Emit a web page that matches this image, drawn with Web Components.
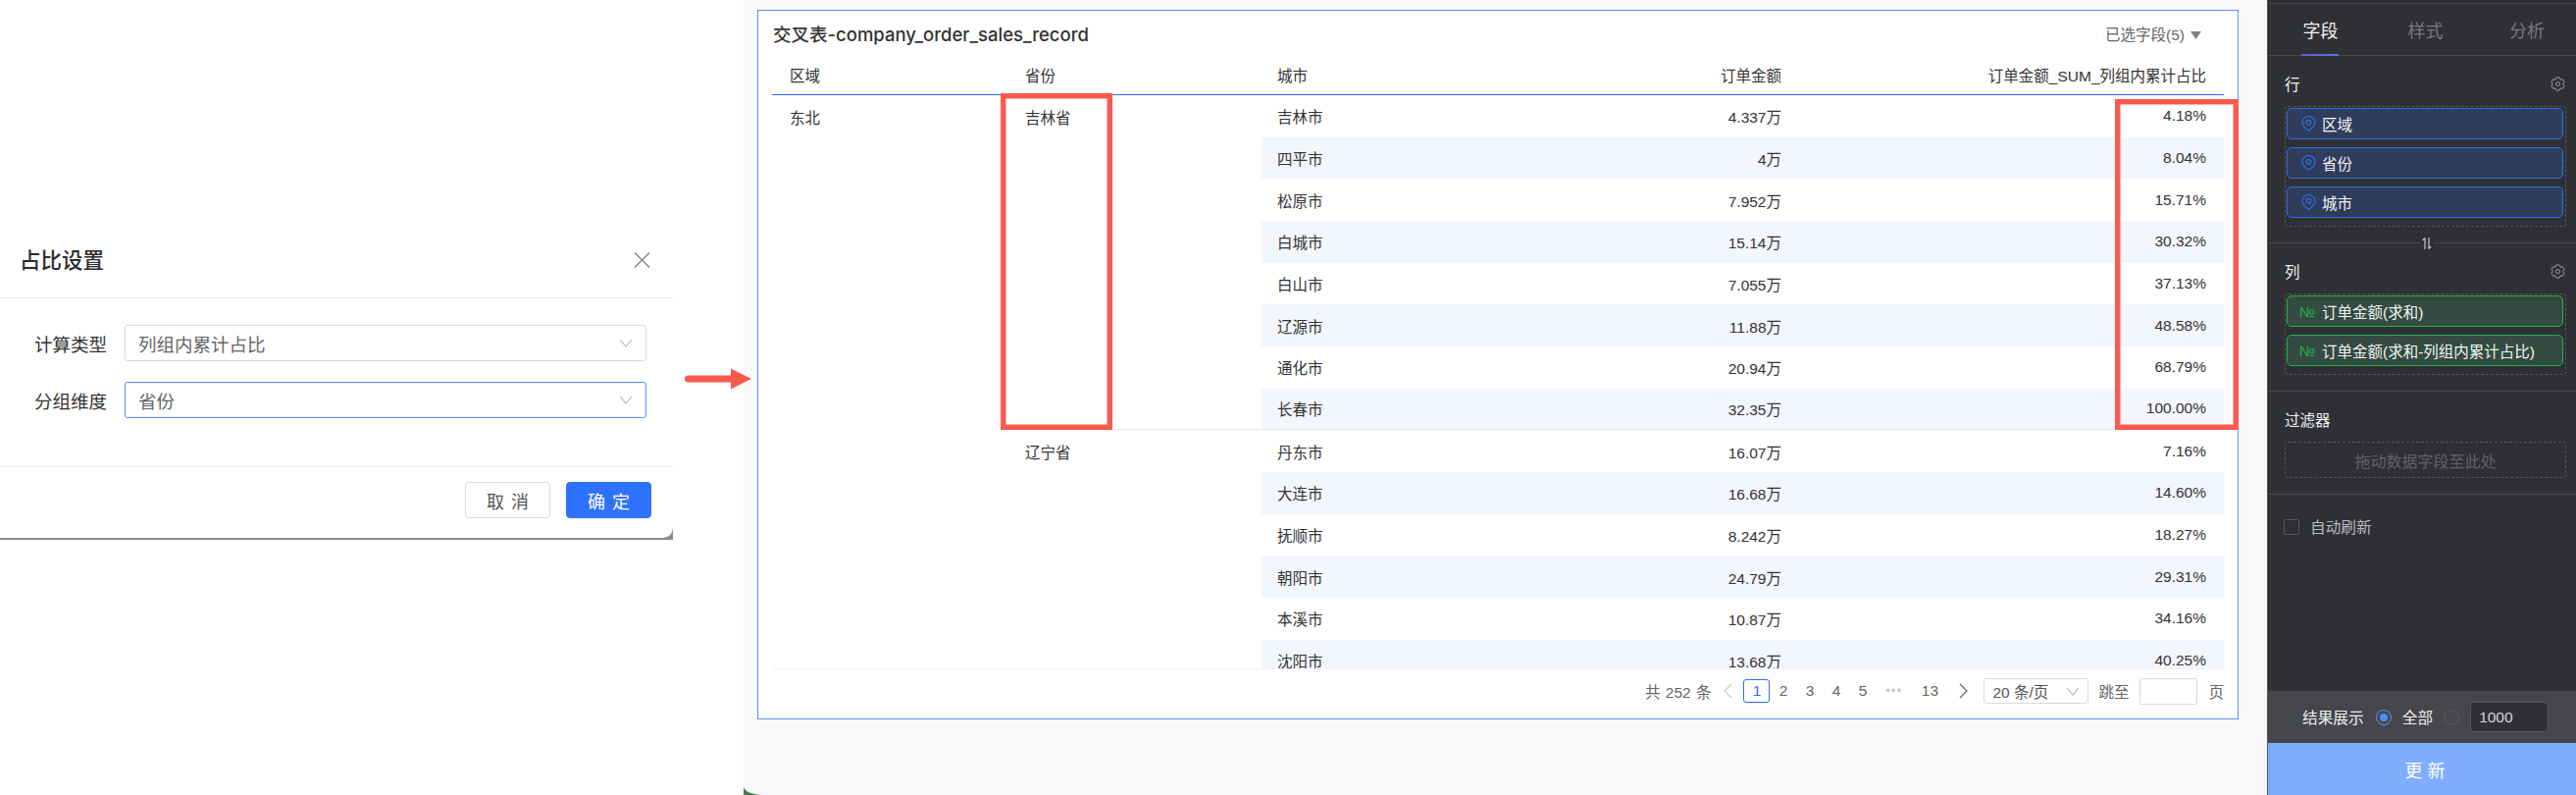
<!DOCTYPE html>
<html lang="zh-CN">
<head>
<meta charset="utf-8">
<title>占比设置</title>
<style>
	html, body { margin: 0; padding: 0; background: #fff; }
	body { font-family: "Liberation Sans", "Noto Sans CJK SC", sans-serif; }
	.page { display: flex; width: 2626px; height: 810px; overflow: hidden; }
</style>
</head>
<body>

<template id="tpl-ratio-dialog">
	<style>
		:host { display: block; position: relative; z-index: 1; width: 758px; height: 810px; background: #fff; flex: none; }
		.box { position: relative; width: 686px; margin-top: 230px; background: #fff; border-bottom: 2px solid #8b8b8b; box-sizing: border-box; height: 320px; color: #333; }
		.box::after { content: ""; position: absolute; right: 0; bottom: 0; width: 9px; height: 9px; background: radial-gradient(circle at 0 0, transparent 8px, #8b8b8b 9px); }
		.head { height: 73px; display: flex; align-items: center; justify-content: space-between; padding: 0 23px 0 20px; border-bottom: 1px solid #ececec; }
		.head b { font-size: 21.5px; font-weight: 500; color: #2b2b2b; padding-bottom: 7px; }
		.head svg { margin-bottom: 3px; }
		.body { height: 172px; box-sizing: border-box; padding: 27px 27px 0 35px; border-bottom: 1px solid #ececec; display: flex; flex-direction: column; gap: 21px; }
		.row { display: flex; align-items: center; gap: 18px; font-size: 18.5px; }
		.row label { width: 74px; white-space: nowrap; }
		.foot { display: flex; justify-content: flex-end; gap: 16px; padding: 15px 22px 0 0; }
		.btn { width: 87px; height: 37px; box-sizing: border-box; display: flex; align-items: center; justify-content: center; border-radius: 4px; font-size: 18px; word-spacing: 2px; border: 1px solid #d9d9d9; color: #555; background: #fff; }
		.btn.main { background: #2f72ff; border-color: #2f72ff; color: #fff; }
		.arrow { position: absolute; left: 698px; top: 375px; }
	</style>
	<div class="box">
		<div class="head">
			<b>占比设置</b>
			<svg width="17" height="16" viewBox="0 0 17 16" fill="none" stroke="#7a7a7a" stroke-width="1.1"><path d="M1 .5l15 15M16 .5l-15 15"/></svg>
		</div>
		<div class="body">
			<div class="row"><label>计算类型</label><select-box>列组内累计占比</select-box></div>
			<div class="row"><label>分组维度</label><select-box focused>省份</select-box></div>
		</div>
		<div class="foot">
			<div class="btn">取 消</div>
			<div class="btn main">确 定</div>
		</div>
	</div>
	<svg class="arrow" width="68" height="22" viewBox="0 0 68 22"><path d="M3.5 7.5H47V.5L68 11 47 21.500V14.500H3.500a3.500 3.500 0 0 1 0-7z" fill="#fb5a4c"/></svg>
</template>

<template id="tpl-select-box">
	<style>
		:host { display: flex; align-items: center; justify-content: space-between; box-sizing: border-box; width: 533px; height: 37px; padding: 0 13px; border: 1px solid #d9d9d9; border-radius: 3px; color: #666; font-size: 18.5px; background: #fff; }
		:host([focused]) { border-color: #5b8ff9; }
		:host([small]) { width: 107px; height: 26px; padding: 0 8px; font-size: 15.5px; color: #555; }
		svg { flex: none; }
	</style>
	<slot></slot>
	<svg width="14" height="9" viewBox="0 0 14 9" fill="none" stroke="#b0b0b0" stroke-width="1.100"><path d="M1 1l6 7 6-7"/></svg>
</template>

<template id="tpl-cross-table">
	<style>
		:host { display: block; width: 1480px; font-size: 15.5px; color: #333; }
		.grid { display: grid; grid-template-columns: 240px 259px 548px 433px; }
		.hd { height: 40px; display: flex; align-items: center; justify-content: space-between; border-bottom: 1px solid #2e6ff0; padding: 0 18px; white-space: nowrap; }
		.hd.city { padding-left: 16px; }
		.hd.r { justify-content: flex-end; }
		.body { height: 584px; overflow: hidden; border-bottom: 1px solid #f1f1f1; grid-auto-rows: 42.667px; }
		.c { display: flex; align-items: center; justify-content: space-between; padding: 0 18px 0 16px; white-space: nowrap; box-sizing: border-box; }
		.c.r { justify-content: flex-end; }
		.span { align-items: flex-start; padding-top: 11px; padding-left: 18px; }
		.alt { background: #f3f6fd; }
		.end { border-bottom: 1px solid #e6e7eb; }
	</style>
	<div class="grid head"></div>
	<div class="grid body"></div>
</template>

<template id="tpl-pager-bar">
	<style>
		:host { display: flex; align-items: center; justify-content: flex-end; width: 1480px; height: 44px; font-size: 15.5px; color: #666; white-space: nowrap; }
		.p { width: 27px; height: 24px; box-sizing: border-box; display: flex; align-items: center; justify-content: center; }
		.p.on { border: 1px solid #2e6ff0; border-radius: 3px; color: #2e6ff0; }
		.p.dots { width: 37px; color: #c2c2c2; font-size: 12px; letter-spacing: 1.5px; }
		.p.last { width: 36px; }
		.total { margin-right: 12px; word-spacing: 1px; }
		.prev { margin-right: 11px; }
		.next { margin: 0 15px 0 12px; }
		.jump { margin: 0 11px 0 10px; }
		.input { width: 59px; height: 27px; box-sizing: border-box; border: 1px solid #d9d9d9; border-radius: 2px; margin-right: 11px; }
		svg { display: block; }
	</style>
	<span class="total">共 252 条</span>
	<svg class="prev" width="10" height="16" viewBox="0 0 10 16" fill="none" stroke="#c9c9c9" stroke-width="1.200"><path d="M9 1L2 8l7 7"/></svg>
	<span class="p on">1</span><span class="p">2</span><span class="p">3</span><span class="p">4</span><span class="p">5</span>
	<span class="p dots">•••</span><span class="p last">13</span>
	<svg class="next" width="10" height="16" viewBox="0 0 10 16" fill="none" stroke="#666" stroke-width="1.200"><path d="M1 1l7 7-7 7"/></svg>
	<select-box small>20 条/页</select-box>
	<span class="jump">跳至</span>
	<span class="input"></span>
	<span>页</span>
</template>

<template id="tpl-report-pane">
	<style>
		:host { display: block; position: relative; flex: none; width: 1553px; height: 810px; background: #f8f8f8; box-sizing: border-box; padding: 10px 0 0 14px; }
		.panel { position: relative; box-sizing: border-box; width: 1510px; height: 723px; background: #fff; border: 1px solid #5b8ff9; padding: 0 14px; }
		.top { height: 45px; display: flex; align-items: center; justify-content: space-between; box-sizing: border-box; padding-top: 1px; }
		.title { font-size: 18.5px; font-weight: 500; color: #333; margin-left: 1px; font-family: Inter, "Noto Sans CJK SC", sans-serif; }
		.picked { display: flex; align-items: center; gap: 6px; font-size: 15.5px; color: #666; margin-right: 23px; }
		.picked svg { margin-top: 3px; }
		.mark { position: absolute; box-sizing: border-box; border: 5px solid #fb5a4c; box-shadow: 0 0 0 1px #ffb3ac inset; }
		.m1 { left: 247px; top: 84px; width: 114px; height: 343px; }
		.m2 { left: 1383px; top: 90px; width: 126px; height: 337px; }
		.corner { position: absolute; left: 0; bottom: 0; }
	</style>
	<div class="panel">
		<div class="top">
			<span class="title">交叉表-company_order_sales_record</span>
			<span class="picked">已选字段(5)<svg width="11" height="8" viewBox="0 0 11 8"><path d="M0 0h11L5.500 8z" fill="#7d8088"/></svg></span>
		</div>
		<cross-table></cross-table>
		<pager-bar></pager-bar>
		<div class="mark m1"></div>
		<div class="mark m2"></div>
	</div>
	<svg class="corner" width="20" height="8" viewBox="0 0 20 8"><path d="M0 0c2 5 8 7 18 8H0z" fill="#4d7c4f"/></svg>
</template>

<template id="tpl-field-chip">
	<style>
		:host { display: flex; align-items: center; height: 32px; box-sizing: border-box; padding-left: 14px; gap: 6px; border: 1px solid #2f6de0; border-radius: 5px; background: #2f3d5c; color: #f2f2f2; font-size: 15.5px; white-space: nowrap; }
		:host([kind="num"]) { border-color: #22b14c; background: #334b40; padding-left: 12px; gap: 6px; }
		.no { display: block; color: #22b14c; font-size: 15px; width: 17px; overflow: hidden; }
		svg { flex: none; }
	</style>
	<span id="ic"></span>
	<slot></slot>
</template>

<template id="tpl-field-section">
	<style>
		:host { display: block; box-sizing: border-box; padding: 17px 10px 16px 17px; color: #f0f0f0; font-size: 15.5px; }
		:host([ruled]) { border-top: 1px solid #47484e; }
		.hd { height: 22px; display: flex; align-items: center; justify-content: space-between; margin-bottom: 12px; padding-right: 1px; }
		.drop { border: 1px dashed #55565c; border-radius: 4px; padding: 1px 2px 8px 1px; display: flex; flex-direction: column; gap: 8px; }
		::slotted(field-chip) { flex: none; }
		:host([empty]) .drop { height: 37px; box-sizing: border-box; padding: 0; align-items: center; justify-content: center; color: #5f6065; font-size: 16px; }
	</style>
	<div class="hd"><span id="name"></span><span id="tool"></span></div>
	<div class="drop"><slot></slot></div>
</template>

<template id="tpl-field-panel">
	<style>
		:host { display: flex; flex-direction: column; position: relative; flex: none; width: 315px; height: 810px; box-sizing: border-box; background: #2f3036; border-left: 1px solid #55565c; font-size: 15.5px; }
		.tabs { display: grid; grid-template-columns: 107px 107px 100px; height: 52px; margin-top: 3px; border-top: 1px solid #47484e; border-bottom: 1px solid #47484e; flex: none; color: #77787c; font-size: 18px; }
		.tabs span { display: flex; align-items: center; justify-content: center; position: relative; padding-bottom: 1px; }
		.tabs .on { color: #f2f2f2; }
		.tabs .on::after { content: ""; position: absolute; left: 34px; width: 38px; bottom: -1px; height: 2px; background: linear-gradient(90deg, #6a5ad0, #3f7fe8); }
		.swap { position: absolute; left: 155px; top: 241px; background: #2f3036; padding: 0 2px; display: block; }
		.auto { display: flex; align-items: center; gap: 11px; padding: 21px 0 0 16px; color: #b9babd; font-size: 15.700px; border-top: 1px solid #47484e; }
		.check { width: 16px; height: 16px; box-sizing: border-box; border: 1px solid #56575c; border-radius: 2px; }
		.fill { flex: 1; }
		.result { height: 53px; flex: none; background: #45464c; color: #eee; display: flex; align-items: center; padding-left: 35px; font-size: 15.700px; }
		.radio { width: 16px; height: 16px; box-sizing: border-box; border-radius: 50%; border: 1px solid #5a5b60; flex: none; }
		.radio.on { border-color: #5b8ff9; display: flex; align-items: center; justify-content: center; }
		.radio.on::before { content: ""; width: 8px; height: 8px; border-radius: 50%; background: #4d8bff; }
		.num { width: 80px; height: 31px; box-sizing: border-box; margin-left: 11px; padding-left: 8px; display: flex; align-items: center; background: #2f3036; border: 1px solid #55565b; border-radius: 4px; color: #d5d5d7; font-size: 15.500px; }
		.go { height: 53px; flex: none; background: #80aeff; color: #fff; display: flex; align-items: center; justify-content: center; font-size: 18px; padding-left: 6px; box-sizing: border-box; }
	</style>
	<div class="tabs"><span class="on">字段</span><span>样式</span><span>分析</span></div>
	<slot></slot>
	<svg class="swap" width="10" height="14" viewBox="0 0 10 14" fill="none" stroke="#c8c8ca" stroke-width="1.200"><path d="M3 13V1.500M.8 3.800L3 1.500M7 1v11.500M9.200 10.200L7 12.500"/></svg>
	<div class="auto"><span class="check"></span>自动刷新</div>
	<div class="fill"></div>
	<div class="result">
		<span>结果展示</span>
		<span class="radio on" style="margin-left:12px"></span>
		<span style="margin-left:11px">全部</span>
		<span class="radio" style="margin-left:11px"></span>
		<span class="num">1000</span>
	</div>
	<div class="go">更 新</div>
</template>

<div class="page">
	<ratio-dialog></ratio-dialog>
	<report-pane></report-pane>
	<field-panel>
		<field-section name="行" gear>
			<field-chip kind="geo">区域</field-chip>
			<field-chip kind="geo">省份</field-chip>
			<field-chip kind="geo">城市</field-chip>
		</field-section>
		<field-section name="列" gear ruled>
			<field-chip kind="num">订单金额(求和)</field-chip>
			<field-chip kind="num">订单金额(求和-列组内累计占比)</field-chip>
		</field-section>
		<field-section name="过滤器" ruled empty>拖动数据字段至此处</field-section>
	</field-panel>
</div>

<script>
'use strict';

// ogni elemento clona il suo template nella shadow root
function mount(el, id) {
	const root = el.attachShadow({mode: 'open'});
	root.appendChild(document.getElementById(id).content.cloneNode(true));
	return root;
}

class RatioDialog extends HTMLElement {
	constructor() { super(); mount(this, 'tpl-ratio-dialog'); }
}
class SelectBox extends HTMLElement {
	constructor() { super(); mount(this, 'tpl-select-box'); }
}
class PagerBar extends HTMLElement {
	constructor() { super(); mount(this, 'tpl-pager-bar'); }
}
class ReportPane extends HTMLElement {
	constructor() { super(); mount(this, 'tpl-report-pane'); }
}
class FieldPanel extends HTMLElement {
	constructor() { super(); mount(this, 'tpl-field-panel'); }
}

const ROWS = [
	['吉林市', '4.337万', '4.18%'], ['四平市', '4万', '8.04%'], ['松原市', '7.952万', '15.71%'],
	['白城市', '15.14万', '30.32%'], ['白山市', '7.055万', '37.13%'], ['辽源市', '11.88万', '48.58%'],
	['通化市', '20.94万', '68.79%'], ['长春市', '32.35万', '100.00%'], ['丹东市', '16.07万', '7.16%'],
	['大连市', '16.68万', '14.60%'], ['抚顺市', '8.242万', '18.27%'], ['朝阳市', '24.79万', '29.31%'],
	['本溪市', '10.87万', '34.16%'], ['沈阳市', '13.68万', '40.25%']
];

class CrossTable extends HTMLElement {
	constructor() {
		super();
		const root = mount(this, 'tpl-cross-table');
		root.querySelector('.head').innerHTML =
			'<div class="hd">区域</div><div class="hd">省份</div>' +
			'<div class="hd city"><span>城市</span><span>订单金额</span></div>' +
			'<div class="hd r">订单金额_SUM_列组内累计占比</div>';
		let html = '<div class="c span" style="grid-column:1;grid-row:1 / span 14">东北</div>' +
			'<div class="c span end" style="grid-column:2;grid-row:1 / span 8">吉林省</div>' +
			'<div class="c span" style="grid-column:2;grid-row:9 / span 6">辽宁省</div>';
		ROWS.forEach((r, i) => {
			const cls = (i % 2 ? ' alt' : '') + (i === 7 ? ' end' : '');
			const pos = 'grid-row:' + (i + 1);
			html += `<div class="c${cls}" style="grid-column:3;${pos}"><span>${r[0]}</span><span>${r[1]}</span></div>`;
			html += `<div class="c r${cls}" style="grid-column:4;${pos}">${r[2]}</div>`;
		});
		root.querySelector('.body').innerHTML = html;
	}
}

const PIN = '<svg width="15" height="16" viewBox="0 0 15 16" fill="none" stroke="#2f6de0" stroke-width="1.200" style="display:block"><path d="M7.500 15.300S1 10.900 1 6.800a6.500 6.300 0 0 1 13 0c0 4.100-6.500 8.500-6.500 8.500z"/><circle cx="7.500" cy="6.700" r="2.300"/></svg>';

class FieldChip extends HTMLElement {
	constructor() {
		super();
		const root = mount(this, 'tpl-field-chip');
		root.getElementById('ic').innerHTML = this.getAttribute('kind') === 'num' ? '<span class="no">№</span>' : PIN;
	}
}

// ingranaggio a sei denti
function gearPath() {
	const pts = [];
	for (let i = 0; i < 6; i++) {
		const a = i * 60 - 90;
		[[6.8, -13], [6.8, 13], [5.2, 30]].forEach(p => {
			const t = (a + p[1]) * Math.PI / 180;
			pts.push((7.500 + p[0] * Math.cos(t)).toFixed(2) + ' ' + (7.500 + p[0] * Math.sin(t)).toFixed(2));
		});
	}
	return 'M' + pts.join('L') + 'z';
}

class FieldSection extends HTMLElement {
	constructor() {
		super();
		const root = mount(this, 'tpl-field-section');
		root.getElementById('name').textContent = this.getAttribute('name');
		if (this.hasAttribute('gear')) {
			root.getElementById('tool').innerHTML = `<svg width="15" height="15" viewBox="0 0 15 15" fill="none" stroke="#9a9b9f" stroke-width="1" stroke-linejoin="round" style="display:block"><path d="${gearPath()}"/><circle cx="7.500" cy="7.500" r="2"/></svg>`;
		}
	}
}

customElements.define('select-box', SelectBox);
customElements.define('ratio-dialog', RatioDialog);
customElements.define('cross-table', CrossTable);
customElements.define('pager-bar', PagerBar);
customElements.define('report-pane', ReportPane);
customElements.define('field-chip', FieldChip);
customElements.define('field-section', FieldSection);
customElements.define('field-panel', FieldPanel);
</script>
</body>
</html>
